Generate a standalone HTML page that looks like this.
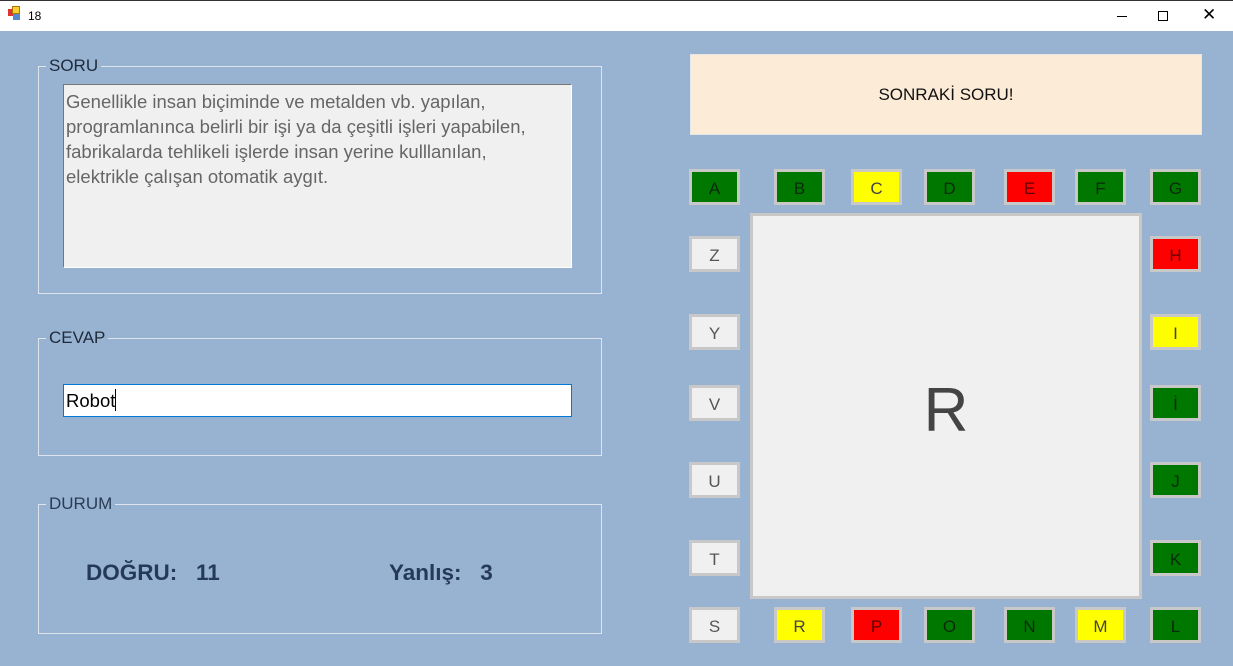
<!DOCTYPE html>
<html><head><meta charset="utf-8"><style>
*{margin:0;padding:0;box-sizing:border-box}
body{width:1233px;height:666px;overflow:hidden;background:#98b3d1;font-family:"Liberation Sans",sans-serif;position:relative}
.tb{position:absolute;left:0;top:0;width:1233px;height:31px;background:#fff;border-top:1px solid #333}
.a{position:absolute}
.gb{position:absolute;border:1px solid #dde4ec}
.gl{position:absolute;background:#98b3d1;padding:0 3px;font-size:17px;color:#1e2a3a;top:-11px;left:7px;line-height:19px}
.b{position:absolute;width:51px;height:36px;border:3px solid #c8c8c8;font-size:17px;color:#222;text-align:center;line-height:33px}
.g{background:#007800;color:#0a2a0a}.y{background:#ff0;color:#444}.r{background:#f00;color:#5a0000}.w{background:#f0f0f0;color:#555}
</style></head><body>
<div class="tb">
<div class="a" style="left:8px;top:8px;width:7px;height:7px;background:#d33"></div>
<div class="a" style="left:12px;top:5px;width:8px;height:8px;background:#fc3;border:1px solid #a70"></div>
<div class="a" style="left:13px;top:13px;width:7px;height:6px;background:#58c"></div>
<div class="a" style="left:28px;top:8px;font-size:12px;color:#000">18</div>
<div class="a" style="left:1117px;top:15px;width:10px;height:1px;background:#000"></div>
<div class="a" style="left:1158px;top:10px;width:10px;height:10px;border:1px solid #000"></div>
<div class="a" style="left:1202px;top:4px;font-size:17px;color:#000">✕</div>
</div>
<div class="gb" style="left:38px;top:66px;width:564px;height:228px"><div class="gl">SORU</div></div>
<div class="a" style="left:63px;top:84px;width:509px;height:184px;background:#f0f0f0;border:1px solid #777;border-right-color:#fff;border-bottom-color:#fff;padding:4px 2px;font-size:18.5px;line-height:25px;color:#666;white-space:nowrap;overflow:hidden">Genellikle insan biçiminde ve metalden vb. yapılan,<br>programlanınca belirli bir işi ya da çeşitli işleri yapabilen,<br>fabrikalarda tehlikeli işlerde insan yerine kulllanılan,<br>elektrikle çalışan otomatik aygıt.</div>
<div class="gb" style="left:38px;top:338px;width:564px;height:118px"><div class="gl">CEVAP</div></div>
<div class="a" style="left:63px;top:384px;width:509px;height:33px;background:#fff;border:1px solid #0078d7;padding:4px 2px;font-size:18.5px;color:#000">Robot<span style="display:inline-block;width:1px;height:22px;background:#000;vertical-align:-4px"></span></div>
<div class="gb" style="left:38px;top:504px;width:564px;height:130px"><div class="gl" style="color:#2a3c55">DURUM</div></div>
<div class="a" style="left:86px;top:560px;font-size:22.5px;font-weight:bold;color:#243a58">DOĞRU:&nbsp;&nbsp; 11</div>
<div class="a" style="left:389px;top:560px;font-size:22.5px;font-weight:bold;color:#243a58">Yanlış:&nbsp;&nbsp; 3</div>
<div class="a" style="left:690px;top:54px;width:512px;height:81px;background:#fbebd7;border:1px solid #e6e6e6;text-align:center;line-height:80px;font-size:17px;color:#111">SONRAKİ SORU!</div>
<div class="a" style="left:750px;top:213px;width:392px;height:386px;background:#f0f0f0;border:3px solid #c8c8c8;text-align:center;line-height:390px;font-size:62px;color:#444">R</div>
<div class="b g" style="left:689px;top:169px">A</div>
<div class="b g" style="left:774px;top:169px">B</div>
<div class="b y" style="left:851px;top:169px">C</div>
<div class="b g" style="left:924px;top:169px">D</div>
<div class="b r" style="left:1004px;top:169px">E</div>
<div class="b g" style="left:1075px;top:169px">F</div>
<div class="b g" style="left:1150px;top:169px">G</div>
<div class="b w" style="left:689px;top:236px">Z</div>
<div class="b w" style="left:689px;top:314px">Y</div>
<div class="b w" style="left:689px;top:385px">V</div>
<div class="b w" style="left:689px;top:462px">U</div>
<div class="b w" style="left:689px;top:540px">T</div>
<div class="b w" style="left:689px;top:607px">S</div>
<div class="b r" style="left:1150px;top:236px">H</div>
<div class="b y" style="left:1150px;top:314px">I</div>
<div class="b g" style="left:1150px;top:385px">İ</div>
<div class="b g" style="left:1150px;top:462px">J</div>
<div class="b g" style="left:1150px;top:540px">K</div>
<div class="b g" style="left:1150px;top:607px">L</div>
<div class="b y" style="left:774px;top:607px">R</div>
<div class="b r" style="left:851px;top:607px">P</div>
<div class="b g" style="left:924px;top:607px">O</div>
<div class="b g" style="left:1004px;top:607px">N</div>
<div class="b y" style="left:1075px;top:607px">M</div>
</body></html>
